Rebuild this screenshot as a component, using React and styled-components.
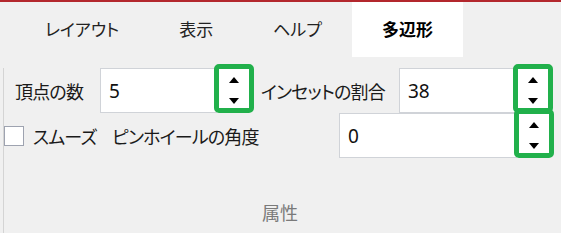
import React from "react";
import styled, { createGlobalStyle } from "styled-components";

const GlobalStyle = createGlobalStyle`
  html, body {
    margin: 0;
    padding: 0;
    background: #f0f0f0;
  }
  body {
    font-family: "Noto Sans CJK JP", "Noto Sans", sans-serif;
    font-feature-settings: "palt";
    color: #1a1a1a;
    width: 561px;
    height: 233px;
    overflow: hidden;
  }
`;

const TopBar = styled.div`
  height: 2px;
  background: #b3272d;
`;

const TabRow = styled.div`
  display: flex;
  height: 55px;
  padding-left: 15px;
`;

const Tab = styled.div`
  display: flex;
  align-items: center;
  justify-content: center;
  padding: 0 30px 2px;
  font-size: 17px;
  font-weight: ${ ( p ) => ( p.active ? 700 : 400 ) };
  color: ${ ( p ) => ( p.active ? "#000" : "#222" ) };
  background: ${ ( p ) => ( p.active ? "#fff" : "transparent" ) };
`;

const Group = styled.div`
  margin: 11px 0 0 3px;
  width: 552px;
  height: 165px;
  border-left: 1px solid #d4d4d4;
  display: flex;
  flex-direction: column;
`;

const Row = styled.div`
  display: grid;
  grid-template-columns: ${ ( p ) => p.cols };
  align-items: center;
  height: 45px;
`;

const Label = styled.span`
  font-size: 18px;
  line-height: 24px;
  letter-spacing: -0.8px;
  white-space: nowrap;
  padding-left: ${ ( p ) => p.pad || 0 }px;
`;

const NumberBox = styled.div`
  height: 45px;
  box-sizing: border-box;
  background: #fff;
  border: 1px solid #d0d3d8;
  display: flex;
  align-items: center;
  padding-left: 8px;
  font-family: "Noto Sans", sans-serif;
  font-size: 19px;
  color: #111;
`;

const Spinner = styled.div`
  position: relative;
  height: 45px;
  background: #fff;
  display: flex;
  flex-direction: column;
  align-items: center;
  justify-content: space-between;
  padding: 9px 0 9px;
  box-sizing: border-box;
`;

const Highlight = styled.div`
  position: absolute;
  top: -4px;
  bottom: 0;
  left: -3px;
  right: -3px;
  border: 5px solid #21b04b;
  border-radius: 5px;
  pointer-events: none;
`;

const Arrow = styled.div`
  width: 0;
  height: 0;
  border-left: 5px solid transparent;
  border-right: 5px solid transparent;
  ${ ( p ) =>
    p.down ? "border-top: 6px solid #000;" : "border-bottom: 6px solid #000;" }
`;

const Check = styled.div`
  width: 20px;
  height: 20px;
  box-sizing: border-box;
  background: #fff;
  border: 1px solid #9ea3b0;
`;

const GroupTitle = styled.div`
  margin-top: 42px;
  text-align: center;
  font-size: 18px;
  line-height: 24px;
  color: #7a7a7a;
`;

function SpinButton () {
  return (
    <Spinner>
      <Arrow />
      <Arrow down />
      <Highlight />
    </Spinner>
  );
}

export default function App () {
  const tabs = [ "レイアウト", "表示", "ヘルプ", "多辺形" ];
  return (
    <>
      <GlobalStyle />
      <TopBar />
      <TabRow>
        { tabs.map( ( t ) => (
          <Tab key={ t } active={ t === "多辺形" }>{ t }</Tab>
        ) ) }
      </TabRow>
      <Group>
        <Row cols="96px 117px 34px 148px 117px 34px">
          <Label pad={ 11 }>頂点の数</Label>
          <NumberBox>5</NumberBox>
          <SpinButton />
          <Label pad={ 10 }>インセットの割合</Label>
          <NumberBox>38</NumberBox>
          <SpinButton />
        </Row>
        <Row cols="29px 79px 227px 178px 34px">
          <Check />
          <Label>スムーズ</Label>
          <Label>ピンホイールの角度</Label>
          <NumberBox>0</NumberBox>
          <SpinButton />
        </Row>
        <GroupTitle>属性</GroupTitle>
      </Group>
    </>
  );
}
